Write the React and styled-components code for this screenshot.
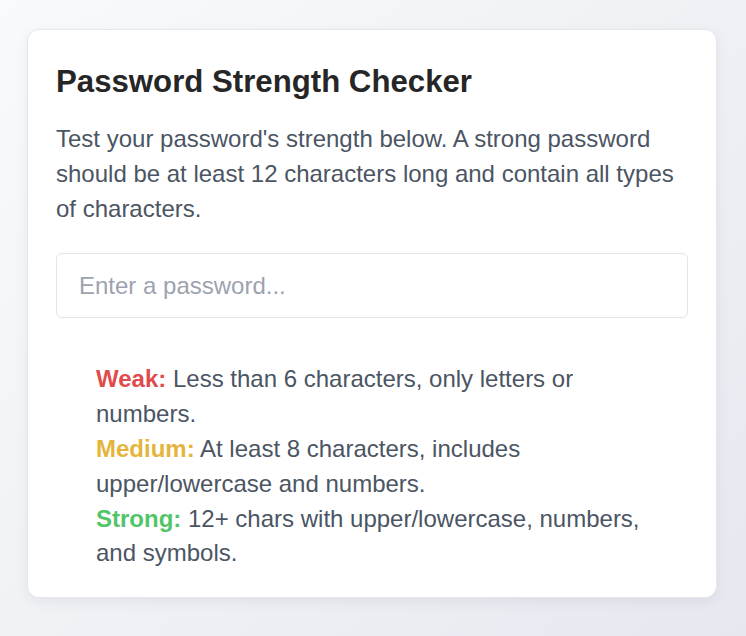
import React from "react";
import styled, { createGlobalStyle } from "styled-components";

const Global = createGlobalStyle`
  html, body { margin: 0; padding: 0; }
  body {
    font-family: "Liberation Sans", Arial, Helvetica, sans-serif;
    background: linear-gradient(135deg, #f9fafb 0%, #e5e8ef 100%);
    min-height: 636px;
  }
`;

const Page = styled.div`
  min-height: 636px;
  box-sizing: border-box;
  padding: 29px 29px 30px 27px;
`;

const Card = styled.div`
  background: #ffffff;
  border: 1px solid #e5e7eb;
  border-radius: 12px;
  box-shadow: 0 4px 14px rgba(17, 24, 39, 0.06);
  padding: 34px 28px 26px;
`;

const Title = styled.h2`
  margin: 0 0 22px;
  font-size: 31.2px;
  line-height: normal;
  font-weight: 700;
  color: #262626;
`;

const Intro = styled.p`
  margin: 0 0 27px;
  font-size: 24px;
  line-height: 34.8px;
  color: #4b5563;
`;

const Input = styled.input`
  display: block;
  box-sizing: border-box;
  width: 100%;
  height: 65px;
  padding: 0 22px;
  border: 1px solid #e3e5ea;
  border-radius: 6px;
  font-family: inherit;
  font-size: 24px;
  color: #374151;
  outline: none;
  &::placeholder { color: #9ca3af; }
`;

const Rules = styled.ul`
  list-style: none;
  margin: 44px 0 0;
  padding: 0 40px;
  font-size: 24px;
  line-height: 34.8px;
  color: #4b5563;
`;

const Rule = styled.li``;

const Level = styled.strong`
  color: ${(p) => p.$color};
  font-weight: 700;
`;

export default function App() {
  return (
    <>
      <Global />
      <Page>
        <Card>
          <Title>Password Strength Checker</Title>
          <Intro>
            Test your password's strength below. A strong password should be at
            least 12 characters long and contain all types of characters.
          </Intro>
          <Input type="password" placeholder="Enter a password..." />
          <Rules>
            <Rule>
              <Level $color="#e04b4b">Weak:</Level> Less than 6 characters, only
              letters or numbers.
            </Rule>
            <Rule>
              <Level $color="#e5b53b">Medium:</Level> At least 8 characters,
              includes upper/lowercase and numbers.
            </Rule>
            <Rule>
              <Level $color="#52c46a">Strong:</Level> 12+ chars with
              upper/lowercase, numbers, and symbols.
            </Rule>
          </Rules>
        </Card>
      </Page>
    </>
  );
}
